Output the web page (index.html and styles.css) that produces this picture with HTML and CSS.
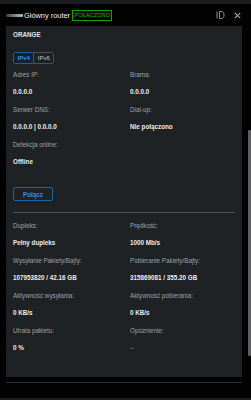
FILE: index.html
```html
<!DOCTYPE html>
<html lang="pl">

<head>
    <meta charset="UTF-8">
    <meta name="viewport" content="width=device-width, initial-scale=1.0">
    <title>Główny router</title>
    <link rel="stylesheet" href="styles.css">
</head>

<body>
    <div class="top-strip"></div>

    <div class="panel">
        <div class="header">
            <div class="router-icon"></div>
            <span class="title">Główny router</span>
            <span class="badge">POŁĄCZONO</span>
            <div class="header-actions">
                <svg class="icon" width="9" height="8" viewBox="0 0 9 8">
                    <path d="M1 0.5V7.5" stroke="#8d9093" stroke-width="1" fill="none" />
                    <path d="M3.5 0.5H5.2C7 0.5 8 1.8 8 4C8 6.2 7 7.5 5.2 7.5H3.5Z" stroke="#8d9093" stroke-width="1" fill="none" />
                </svg>
                <svg class="icon" width="7" height="7" viewBox="0 0 7 7">
                    <path d="M0.8 0.8L6.2 6.2M6.2 0.8L0.8 6.2" stroke="#a3a6a9" stroke-width="1.1" fill="none" />
                </svg>
            </div>
        </div>

        <div class="card">
            <div class="isp">ORANGE</div>

            <div class="segmented">
                <div class="seg active">IPv4</div>
                <div class="seg">IPv6</div>
            </div>

            <div class="grid">
                <div class="field">
                    <div class="label">Adres IP:</div>
                    <div class="value">0.0.0.0</div>
                </div>
                <div class="field">
                    <div class="label">Brama:</div>
                    <div class="value">0.0.0.0</div>
                </div>
                <div class="field">
                    <div class="label">Serwer DNS:</div>
                    <div class="value">0.0.0.0 | 0.0.0.0</div>
                </div>
                <div class="field">
                    <div class="label">Dial-up:</div>
                    <div class="value">Nie połączono</div>
                </div>
                <div class="field">
                    <div class="label">Detekcja online:</div>
                    <div class="value">Offline</div>
                </div>
            </div>

            <button class="connect">Połącz</button>

            <div class="divider"></div>

            <div class="grid">
                <div class="field">
                    <div class="label">Dupleks:</div>
                    <div class="value">Pełny dupleks</div>
                </div>
                <div class="field">
                    <div class="label">Prędkość:</div>
                    <div class="value">1000 Mb/s</div>
                </div>
                <div class="field">
                    <div class="label">Wysyłanie Pakiety/Bajty:</div>
                    <div class="value">107953820 / 42.16 GB</div>
                </div>
                <div class="field">
                    <div class="label">Pobieranie Pakiety/Bajty:</div>
                    <div class="value">315869081 / 355.20 GB</div>
                </div>
                <div class="field">
                    <div class="label">Aktywność wysyłania:</div>
                    <div class="value">0 KB/s</div>
                </div>
                <div class="field">
                    <div class="label">Aktywność pobierania:</div>
                    <div class="value">0 KB/s</div>
                </div>
                <div class="field">
                    <div class="label">Utrata pakietu:</div>
                    <div class="value">0 %</div>
                </div>
                <div class="field">
                    <div class="label">Opóźnienie:</div>
                    <div class="value dim">--</div>
                </div>
            </div>
        </div>

        <div class="footer-line"></div>

        <div class="scroll-thumb"></div>
    </div>

    <div class="bottom-strip"></div>
</body>

</html>
```

FILE: styles.css
```css
html,
body {
    margin: 0;
    padding: 0;
    width: 100%;
    height: 100%;
    background: #000;
    color: #e9eaeb;
    font-family: "Liberation Sans", Arial, sans-serif;
}

body {
    display: flex;
    flex-direction: column;
    overflow: hidden;
}

.top-strip {
    height: 4px;
    background: #1b1e21;
}

.bottom-strip {
    height: 2px;
    background: #1b1e21;
}

.panel {
    position: relative;
    flex: 1;
    background: #020202;
    padding: 0 9px 0 6px;
}

.header {
    display: flex;
    align-items: center;
    height: 22px;
}

.router-icon {
    width: 17px;
    height: 3px;
    margin-right: 1px;
    margin-top: 1px;
    background: linear-gradient(90deg, #3a3c3e, #8a8c8e 60%, #b9bbbd);
    border-radius: 1px;
}

.title {
    font-size: 7.4px;
    color: #f1f1f1;
    margin-right: 2px;
}

.badge {
    font-size: 5.6px;
    color: #1fb51f;
    border: 1px solid #13a313;
    padding: 1.5px 1px 1.5px 1.5px;
    line-height: 6px;
    letter-spacing: 0.05px;
}

.header-actions {
    margin-left: auto;
    display: flex;
    align-items: center;
    gap: 9px;
    padding-right: 1px;
}

.icon {
    display: block;
}

.card {
    background: #1f2225;
    padding: 0 7px 20px 7px;
}

.isp {
    font-size: 6.3px;
    font-weight: bold;
    color: #e4e5e6;
    line-height: 18px;
}

.segmented {
    display: inline-flex;
    margin-top: 8px;
    height: 12px;
    border-radius: 2px;
    overflow: hidden;
}

.seg {
    font-size: 6px;
    line-height: 10px;
    padding: 0 3.5px;
    border: 1px solid #4a4e52;
    color: #c4c6c8;
}

.seg + .seg {
    border-left: none;
    border-radius: 0 2px 2px 0;
}

.seg.active {
    color: #2d8ff0;
    font-weight: bold;
    background: #0e2236;
    border-color: #1e5f99;
    border-radius: 2px 0 0 2px;
}

.grid {
    display: grid;
    grid-template-columns: 117px 1fr;
    margin-top: 2px;
}

.field {
    height: 35px;
}

.label {
    font-size: 6.3px;
    line-height: 17px;
    color: #9ea2a6;
}

.value {
    font-size: 6.3px;
    line-height: 18px;
    font-weight: bold;
    color: #eceded;
}

.value.dim {
    color: #8e9296;
    font-weight: normal;
}

.connect {
    display: block;
    margin-top: 16px;
    width: 40px;
    height: 14px;
    padding: 0;
    background: transparent;
    border: 1px solid #1d639f;
    border-radius: 2px;
    color: #2d8ff0;
    font-family: inherit;
    font-size: 6.3px;
    font-weight: bold;
}

.divider {
    margin-top: 11px;
    height: 1px;
    background: #4e5256;
}

.divider + .grid {
    margin-top: 4px;
}

.footer-line {
    margin-top: 5px;
    height: 1px;
    background: #2c3034;
}

.scroll-thumb {
    position: absolute;
    right: 0;
    top: 126px;
    width: 3px;
    height: 226px;
    background: #5a5f64;
    border-radius: 1px;
}
```
